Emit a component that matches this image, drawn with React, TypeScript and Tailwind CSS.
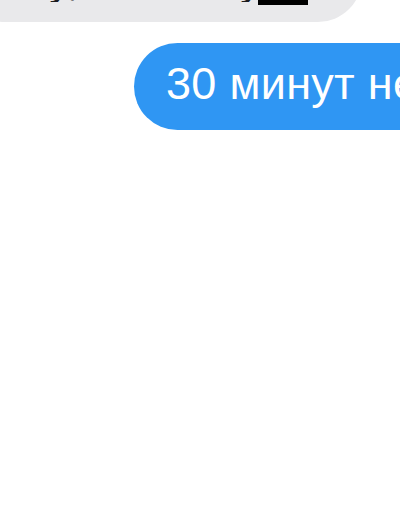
export default function App() {
  return (
    <div
      className="relative h-[530px] w-[400px] overflow-hidden bg-white"
      style={{ fontFamily: '"Liberation Sans", Arial, sans-serif' }}
    >
      {/* incoming bubble, mostly scrolled off the top */}
      <div className="-mt-[70px] -ml-[40px] flex h-[92px] w-[402px] items-end rounded-[44px] bg-[#e9e9eb] pb-[20px] pl-[58px]">
        <span className="w-[240px] overflow-hidden whitespace-nowrap text-[42px] leading-none tracking-[1px] text-[#1c1c1e]">
          Ну, а там будут
        </span>
        <span className="mb-[-3px] h-[30px] w-[50px] bg-black" />
      </div>

      {/* outgoing bubble */}
      <div className="mt-[21px] ml-[134px] flex h-[87px] w-[420px] items-center rounded-full bg-[#2f96f3] pb-[7px] pl-[32px]">
        <span className="whitespace-nowrap text-[45px] leading-none tracking-[0.3px] text-white">30 минут не</span>
      </div>
    </div>
  );
}
